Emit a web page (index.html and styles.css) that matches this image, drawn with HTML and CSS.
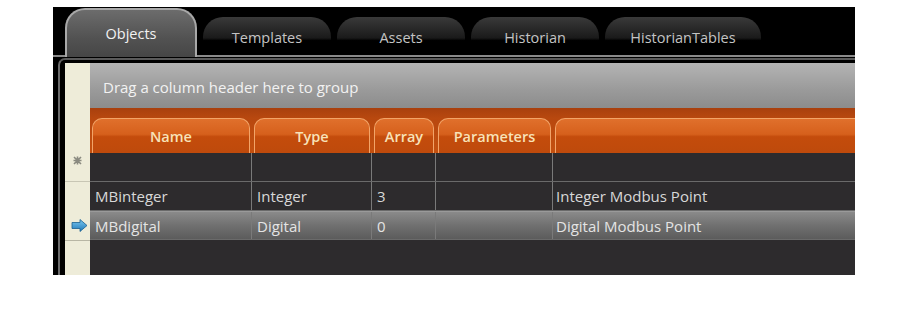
FILE: index.html
```html
<!DOCTYPE html>
<html lang="en">
<head>
    <meta charset="UTF-8">
    <title>Objects</title>
    <link rel="stylesheet" href="styles.css">
</head>
<body>

    <div class="window">
        <div class="tabs">
            <div class="tab active">Objects</div>
            <div class="tab">Templates</div>
            <div class="tab">Assets</div>
            <div class="tab">Historian</div>
            <div class="tab wide">HistorianTables</div>
        </div>

        <div class="frame">
            <!-- row selectors -->
            <div class="row-heads">
                <div class="rh-top"></div>
                <div class="rh new">
                    <svg width="9" height="9" viewBox="0 0 9 9">
                        <path d="M1 1 L8 8 M8 1 L1 8 M4.5 0.5 V8.5 M0.5 4.5 H8.5" stroke="#8a8a80" stroke-width="1.6"/>
                    </svg>
                </div>
                <div class="rh"></div>
                <div class="rh">
                    <svg width="17" height="13" viewBox="0 0 17 13">
                        <defs>
                            <linearGradient id="ar" x1="0" y1="0" x2="0" y2="1">
                                <stop offset="0" stop-color="#7cc8f0"/>
                                <stop offset="1" stop-color="#1f78b8"/>
                            </linearGradient>
                        </defs>
                        <path d="M1 3.5 H9 V0.5 L16 6.5 L9 12.5 V9.5 H1 Z" fill="url(#ar)" stroke="#1a5f90" stroke-width="0.8"/>
                    </svg>
                </div>
            </div>

            <div class="grid">
                <div class="group-panel">Drag a column header here to group</div>

                <div class="cols heads">
                    <div class="colhead">Name</div>
                    <div class="colhead">Type</div>
                    <div class="colhead">Array</div>
                    <div class="colhead">Parameters</div>
                    <div class="colhead"></div>
                </div>

                <div class="cols row">
                    <div class="cell"></div>
                    <div class="cell"></div>
                    <div class="cell"></div>
                    <div class="cell"></div>
                    <div class="cell"></div>
                </div>
                <div class="cols row">
                    <div class="cell">MBinteger</div>
                    <div class="cell">Integer</div>
                    <div class="cell">3</div>
                    <div class="cell"></div>
                    <div class="cell">Integer Modbus Point</div>
                </div>
                <div class="cols row selected">
                    <div class="cell">MBdigital</div>
                    <div class="cell">Digital</div>
                    <div class="cell">0</div>
                    <div class="cell"></div>
                    <div class="cell">Digital Modbus Point</div>
                </div>
            </div>
        </div>
    </div>

</body>
</html>
```

FILE: styles.css
```css
body {
    background-color: #fff;
    font-family: 'Open Sans', 'Liberation Sans', sans-serif;
    margin: 0;
}

.window {
    background-color: #000;
    width: 802px;
    height: 268px;
    margin: 7px 0 0 53px;
    display: flex;
    flex-direction: column;
    overflow: hidden;
}

/* Tab strip */
.tabs {
    display: flex;
    align-items: flex-end;
    gap: 6px;
    height: 50px;
    box-sizing: border-box;
    padding: 3px 0 0 12px;
    border-bottom: 2px solid #8a8a8a;
}

.tab {
    width: 128px;
    height: 38px;
    box-sizing: border-box;
    padding-top: 11px;
    border-radius: 20px 20px 0 0;
    background: linear-gradient(#3a3a3a, #1a1a1a 55%, #000 62%);
    color: #c4c4c4;
    font-size: 14.5px;
    text-align: center;
}

.tab.wide {
    width: 156px;
}

.tab.active {
    width: 132px;
    height: 49px;
    padding-top: 14px;
    border: 2px solid #a8a8a8;
    border-bottom: none;
    background: linear-gradient(#6c6c6c, #525252 60%, #464646);
    color: #f2f2f2;
    margin-bottom: -2px;
}

/* Content frame */
.frame {
    flex: 1;
    display: flex;
    margin: 1px 0 0 5px;
    border-left: 2px solid #6c6c6c;
    border-top: 2px solid #5a5a5a;
    border-top-left-radius: 7px;
    padding: 3px 0 0 5px;
}

.row-heads {
    width: 25px;
    background-color: #eeecd9;
    display: flex;
    flex-direction: column;
}

.rh-top {
    height: 90px;
}

.rh {
    height: 29px;
    display: flex;
    align-items: center;
    justify-content: center;
}

.rh.new {
    align-items: flex-start;
    padding-top: 3px;
    border-bottom: 1px solid #c8c6b4;
    box-sizing: content-box;
    height: 25px;
}

.rh:last-child {
    border-bottom: 1px solid #b8b6a4;
    padding-left: 4px;
}

.grid {
    flex: 1;
    background-color: #2d2b2d;
}

.group-panel {
    height: 45px;
    box-sizing: border-box;
    padding: 14px 0 0 13px;
    background: linear-gradient(#b4b4b4, #9a9a9a 60%, #8c8c8c);
    color: #f2f2f2;
    font-size: 15px;
}

.cols {
    display: grid;
    grid-template-columns: 162px 120px 64px 117px 1fr;
}

/* Orange column headers */
.heads {
    height: 45px;
    align-items: end;
    background: linear-gradient(#a8400e, #b8480f 10px, #c4500f);
}

.colhead {
    height: 35px;
    box-sizing: border-box;
    margin: 0 2px;
    padding-top: 8px;
    border: 1px solid #f2a468;
    border-bottom: none;
    border-radius: 10px 10px 0 0;
    background: linear-gradient(#e0702c, #d6601c 45%, #c44c0c 52%, #be4a0c);
    color: #f8e2b8;
    font-size: 14.5px;
    font-weight: 600;
    text-align: center;
}

.colhead:last-child {
    margin-right: 0;
    border-right: none;
    border-radius: 10px 0 0 0;
}

.row {
    height: 29px;
    border-bottom: 1px solid #6a6a6a;
    box-sizing: border-box;
    color: #d8d8d8;
    font-size: 15px;
}

.row .cell {
    border-right: 1px solid #7a7a7a;
    padding: 4px 0 0 5px;
    white-space: nowrap;
}

.row .cell:last-child {
    border-right: none;
    padding-left: 3px;
}

.row.selected {
    background: linear-gradient(#8a8a8a, #707070 50%, #5c5c5c);
    border-top: 1px solid #9a9a9a;
    color: #e4e4e4;
}
```
